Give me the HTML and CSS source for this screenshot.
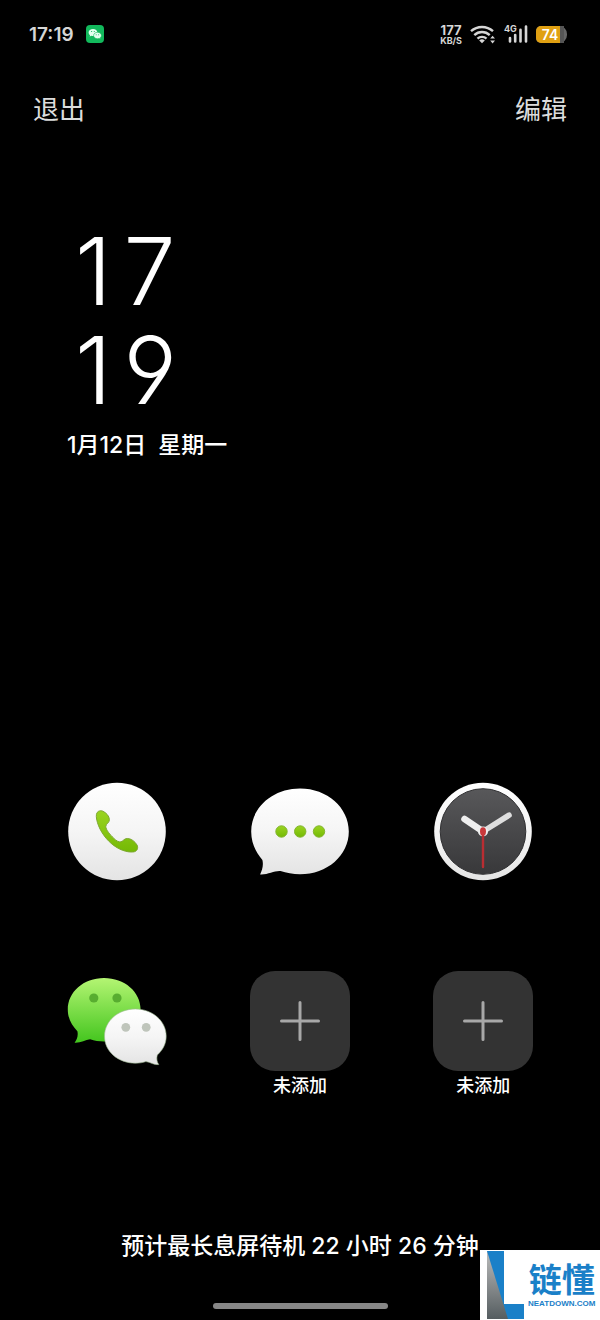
FILE: index.html
```
<!DOCTYPE html>
<html lang="zh-CN">
<head>
    <meta charset="UTF-8">
    <meta name="viewport" content="width=device-width, initial-scale=1.0">
    <title>超级省电</title>
    <link rel="stylesheet" href="styles.css">
</head>
<body>
    <div class="status-bar">
        <div class="status-left">
            <span class="status-time">17:19</span>
            <svg class="status-app" viewBox="0 0 18 18">
                <rect width="18" height="18" rx="4" fill="#12b95c"/>
                <path d="M7 4C4.500 4 2.600 5.500 2.600 7.500c0 1.100.6 2 1.500 2.700l-.4 1.400 1.700-.8c.6.2 1.300.2 1.900.2C9.800 11 11.400 9.400 11.400 7.500S9.500 4 7 4z" fill="#e4fff0"/>
                <path d="M11.500 7.300c-2.200 0-3.900 1.400-3.900 3.200s1.700 3.200 3.900 3.200c.6 0 1.100-.1 1.600-.3l1.300.7-.3-1.200c.8-.6 1.300-1.400 1.300-2.400 0-1.800-1.700-3.200-3.900-3.200z" fill="#e4fff0" stroke="#12b95c" stroke-width=".6"/>
                <g fill="#12b95c"><circle cx="5.600" cy="6.500" r=".6"/><circle cx="8.300" cy="6.500" r=".6"/><circle cx="10.200" cy="9.700" r=".5"/><circle cx="12.600" cy="9.700" r=".5"/></g>
            </svg>
        </div>
        <div class="status-right">
            <div class="net-speed">
                <span class="speed-value">177</span>
                <span class="speed-unit">KB/S</span>
            </div>
            <svg class="wifi" viewBox="0 0 26 20">
                <g fill="none" stroke="#d6d6d6" stroke-width="2.400">
                    <path d="M1 7.200a16.500 16.500 0 0 1 22 0"/>
                    <path d="M4.300 11.100a11.300 11.300 0 0 1 15.400 0"/>
                    <path d="M7.500 14.700a6.500 6.500 0 0 1 9 0"/>
                </g>
                <path d="M9.200 16.400a4.400 4.400 0 0 1 5.600 0L12 19.200z" fill="#d6d6d6"/>
                <path d="M20.200 14.600l2.400-2.800 2.400 2.800zM20.200 16.600l2.400 2.800 2.400-2.800z" fill="#d6d6d6"/>
            </svg>
            <div class="cellular">
                <svg class="bars" viewBox="0 0 24 20">
                    <path d="M6 17.500v-3.500M11.200 17.500v-6.500M16.500 17.500V5.800M22 17.500V2.500" stroke="#d6d6d6" stroke-width="2.600" stroke-linecap="round"/>
                </svg>
                <span class="net-type">4G</span>
            </div>
            <div class="battery"><span class="battery-body">74</span></div>
        </div>
    </div>

    <div class="toolbar">
        <button class="text-btn">退出</button>
        <button class="text-btn">编辑</button>
    </div>

    <div class="clock">
        <div class="digits"><span>1</span><span>7</span></div>
        <div class="digits"><span>1</span><span>9</span></div>
        <p class="date"><span>1月12日</span><span>星期一</span></p>
    </div>

    <div class="apps">
        <button class="app" aria-label="电话">
            <svg class="app-icon" viewBox="0 0 100 100">
                <defs>
                    <linearGradient id="white" x1="0" y1="0" x2="0" y2="1"><stop offset="0" stop-color="#ffffff"/><stop offset=".5" stop-color="#f5f5f5"/><stop offset="1" stop-color="#e4e4e4"/></linearGradient>
                    <linearGradient id="lime" x1="0" y1="0" x2="0" y2="1"><stop offset="0" stop-color="#9ad420"/><stop offset="1" stop-color="#74b905"/></linearGradient>
                    <linearGradient id="green" x1="0" y1="0" x2="0" y2="1"><stop offset="0" stop-color="#b4f573"/><stop offset="1" stop-color="#43c51e"/></linearGradient>
                    <linearGradient id="dial" x1="0" y1="0" x2="0" y2="1"><stop offset="0" stop-color="#58585a"/><stop offset="1" stop-color="#38383a"/></linearGradient>
                </defs>
                <circle cx="50" cy="50.500" r="48.800" fill="url(#white)"/>
                <path d="M31.500 30.300C29.200 31.500 29 34.500 29.600 38c1.600 9 7.500 18.500 15.500 25.200 6.500 5.200 14.400 8.500 21.500 7.700 3.600-.5 5-3.900 3.400-6.900-2.200-3.800-5.800-6.200-9.300-6.500-3.500-.3-4.300 2.600-6.800 3.300-2.100.5-4.600-1-7-3.400-3.600-3.500-8.200-8.600-8.100-12 .1-2.600 3.700-3.600 3.600-6.800-.2-3.600-3.100-6.700-6.300-8.300-1.600-.8-3.200-.7-4.600 0z" fill="url(#lime)" stroke="#7da832" stroke-width="1"/>
            </svg>
        </button>
        <button class="app" aria-label="短信">
            <svg class="app-icon" viewBox="0 0 100 100">
                <path d="M50 7.500C22.800 7.500 1.200 26.500 1.200 50.500c0 11.500 4.600 20.800 11.200 28.500 1.300 5.600-.3 10.500-2.300 14.400 7.500.6 14.400-3.900 20.400-3.300 5.800 1.800 12.400 3.200 19.500 3.200 27.200 0 48.800-18.800 48.800-42.800S77.200 7.500 50 7.500z" fill="url(#white)"/>
                <g fill="url(#lime)" stroke="#83b52f" stroke-width="1"><circle cx="31.500" cy="50.500" r="5.700"/><circle cx="50.200" cy="50.500" r="5.700"/><circle cx="69" cy="50.500" r="5.700"/></g>
            </svg>
        </button>
        <button class="app" aria-label="时钟">
            <svg class="app-icon" viewBox="0 0 100 100">
                <circle cx="50" cy="50.500" r="48.800" fill="url(#white)"/>
                <circle cx="50" cy="50.500" r="42.800" fill="url(#dial)" stroke="#303032" stroke-width="1"/>
                <path d="M50 50.500L31.500 38" stroke="#efefef" stroke-width="6.500" stroke-linecap="round"/>
                <path d="M50 50.500L76 34.200" stroke="#dedede" stroke-width="5.600" stroke-linecap="round"/>
                <circle cx="50" cy="50.500" r="5" fill="#eeeeee"/>
                <path d="M50 50.500V86" stroke="#b92d32" stroke-width="2.400" stroke-linecap="round"/>
                <ellipse cx="50" cy="50.500" rx="3" ry="4.200" fill="#c9383b"/>
            </svg>
        </button>
        <button class="app" aria-label="微信">
            <svg class="app-icon" viewBox="0 0 100 100">
                <path d="M37 6.900C16.500 6.900.8 20.800.8 38.500c0 9 4 16 9.600 21.700 1 4.300-.5 8.300-2.800 11.500 5.800.5 10.600-2.900 15.500-3.400C27.500 70 32 70.500 37 70.500c20.500 0 36.600-14.200 36.600-32S57.500 6.900 37 6.900z" fill="url(#green)"/>
                <g fill="#58ad30"><circle cx="26.800" cy="27" r="4.600"/><circle cx="50" cy="27" r="4.600"/></g>
                <path d="M68.300 38C51.200 38 37.500 50 37.500 65.200s13.700 27 30.800 27c3.800 0 7.300-.5 10.600-1.600 4.600.4 8 3.800 12.900 3-1.900-2.700-2.500-6-1.500-9.600 5.400-5 8.900-11 8.900-18.800C99.200 50 85.400 38 68.300 38z" fill="url(#white)" stroke="#9fba94" stroke-width=".6"/>
                <g fill="#bfc5bb"><circle cx="58.800" cy="56.300" r="4.400"/><circle cx="79.200" cy="56.300" r="4.400"/></g>
            </svg>
        </button>
        <button class="app">
            <span class="add-tile">
                <svg class="plus" viewBox="0 0 40 40"><path d="M20 1.500v37M1.500 20h37"/></svg>
            </span>
            <span class="app-name">未添加</span>
        </button>
        <button class="app">
            <span class="add-tile">
                <svg class="plus" viewBox="0 0 40 40"><path d="M20 1.500v37M1.500 20h37"/></svg>
            </span>
            <span class="app-name">未添加</span>
        </button>
    </div>

    <p class="standby">预计最长息屏待机 22 小时 26 分钟</p>
    <div class="home-bar"></div>

    <div class="watermark">
        <svg class="mark" viewBox="0 0 37 68">
            <defs>
                <linearGradient id="steel" x1="0" y1="0" x2="0" y2="1"><stop offset="0" stop-color="#bcbcbc"/><stop offset="1" stop-color="#555d60"/></linearGradient>
            </defs>
            <path d="M0 0h17v53h20v15H0z" fill="#1a80c8"/>
            <path d="M0 0l21 68H0z" fill="url(#steel)"/>
        </svg>
        <div class="mark-text">
            <span class="mark-name">链懂</span>
            <span class="mark-site">NEATDOWN.COM</span>
        </div>
    </div>
</body>
</html>
```
FILE: styles.css
```
* {
    margin: 0;
    padding: 0;
    box-sizing: border-box;
}

body {
    min-height: 100vh;
    background: #000;
    color: #fff;
    display: flex;
    flex-direction: column;
    font-family: Inter, "Noto Sans CJK SC", sans-serif;
    position: relative;
}

button {
    background: none;
    border: none;
    color: inherit;
    font-family: inherit;
    cursor: pointer;
}

.status-bar {
    height: 68px;
    padding: 0 33px 0 29px;
    display: flex;
    align-items: center;
    justify-content: space-between;
    color: #d6d6d6;
}

.status-left,
.status-right {
    display: flex;
    align-items: center;
}

.status-left {
    gap: 12px;
}

.status-right {
    gap: 8px;
}

.status-time {
    font-size: 19px;
    font-weight: 600;
}

.status-app {
    width: 18px;
    height: 18px;
}

.net-speed {
    display: flex;
    flex-direction: column;
    align-items: center;
    font-weight: 700;
}

.speed-value {
    font-size: 13px;
    line-height: 12px;
}

.speed-unit {
    font-size: 9px;
    line-height: 9px;
}

.wifi {
    width: 26px;
    height: 20px;
}

.cellular {
    position: relative;
    height: 20px;
}

.bars {
    width: 24px;
    height: 20px;
}

.net-type {
    position: absolute;
    top: 0;
    left: 0;
    font-size: 9px;
    line-height: 9px;
    font-weight: 700;
}

.battery {
    width: 31px;
    height: 17px;
    padding-right: 3px;
    border-radius: 5px 8px 8px 5px;
    background: #666;
}

.battery-body {
    display: block;
    height: 17px;
    border-radius: 5px 0 0 5px;
    background: linear-gradient(to right, #e0a012 86%, #555 86%);
    color: #fff;
    font-size: 14px;
    line-height: 17px;
    font-weight: 600;
    text-align: center;
}

.toolbar {
    padding: 22px 33px 0;
    display: flex;
    justify-content: space-between;
}

.text-btn {
    font-size: 26px;
    line-height: 40px;
    color: #dcdcdc;
}

.clock {
    padding: 92px 67px 0;
}

/* cv04 gives the nine a straight leg */
.digits {
    padding-left: 8px;
    display: flex;
    gap: 12px;
    font-size: 93px;
    line-height: 99px;
    font-weight: 300;
    font-feature-settings: "cv04";
}

.date {
    display: flex;
    gap: 12px;
    margin-top: 10px;
    font-size: 23px;
    line-height: 30px;
    font-weight: 500;
}

.apps {
    margin-top: auto;
    padding: 0 25px;
    display: grid;
    grid-template-columns: repeat(3, 1fr);
    row-gap: 90px;
}

.app {
    display: flex;
    flex-direction: column;
    align-items: center;
}

.app-icon,
.add-tile {
    width: 100px;
    height: 100px;
}

.add-tile {
    display: flex;
    align-items: center;
    justify-content: center;
    border-radius: 25px;
    background: #333;
}

.plus {
    width: 40px;
    height: 40px;
    fill: none;
    stroke: #a8a8a8;
    stroke-width: 3;
    stroke-linecap: round;
}

.app-name {
    font-size: 18px;
    line-height: 30px;
    font-weight: 500;
}

.standby {
    margin-top: 129px;
    font-size: 23px;
    line-height: 32px;
    font-weight: 500;
    text-align: center;
}

.home-bar {
    width: 175px;
    height: 6px;
    margin: 41px auto 11px;
    border-radius: 3px;
    background: #868686;
}

.watermark {
    position: absolute;
    right: 0;
    bottom: 0;
    width: 120px;
    height: 70px;
    padding-left: 7px;
    display: flex;
    align-items: center;
    gap: 4px;
    background: #fff;
    color: #1a80c8;
}

.mark {
    width: 37px;
    height: 68px;
}

.mark-text {
    display: flex;
    flex-direction: column;
    align-items: center;
}

.mark-name {
    font-size: 33px;
    line-height: 38px;
    font-weight: 700;
}

.mark-site {
    font-family: "Liberation Sans", sans-serif;
    font-size: 8px;
    line-height: 10px;
    font-weight: 700;
}
```
